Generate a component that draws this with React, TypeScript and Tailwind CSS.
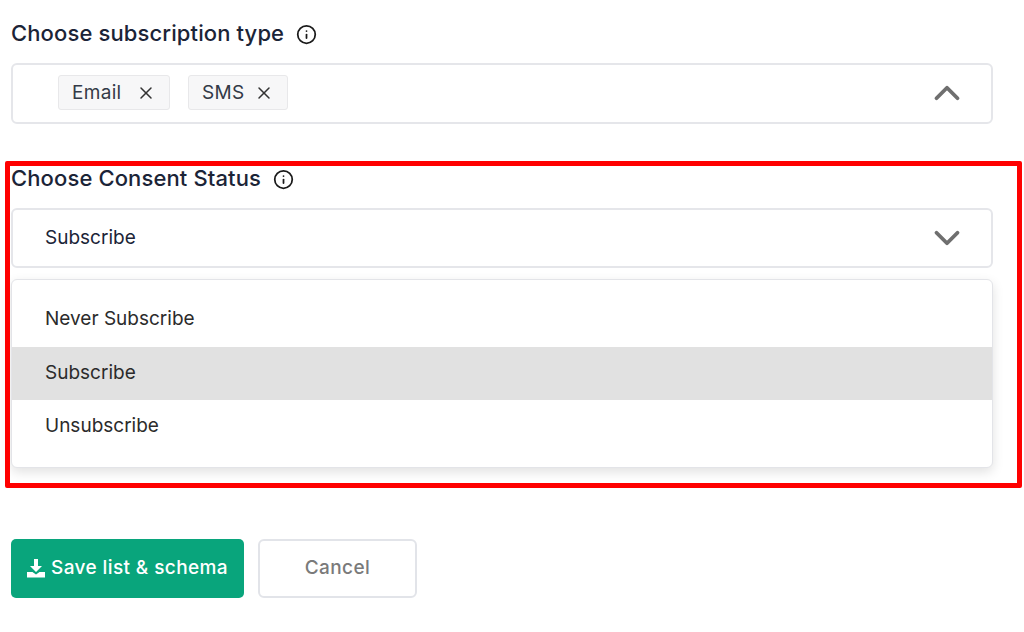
import { ChevronDown, ChevronUp, Info, X } from "lucide-react";

const Label = ({ text }: { text: string }) => (
  <div className="flex h-[30px] items-center gap-[12px] text-[22px] leading-[30px] font-medium tracking-[0.12px] text-[#1b2437]">
    <span className="pb-[2px]">{text}</span>
    <Info size={21} strokeWidth={2} className="text-[#1a1a1a]" />
  </div>
);

const Chip = ({ text, width }: { text: string; width: string }) => (
  <div
    className={`flex h-[35px] items-center justify-between rounded-[3px] border border-[#e8e8ea] bg-[#f7f7f8] pl-[13px] pr-[13px] text-[19px] tracking-[0.3px] text-[#333a47] ${width}`}
  >
    <span className="pt-[1px]">{text}</span>
    <X size={20} strokeWidth={1.8} className="text-[#333]" />
  </div>
);

const DownloadIcon = () => (
  <svg width="18" height="19" viewBox="0 0 18 19" fill="white">
    <path d="M7 0h4v7h4l-6 6-6-6h4z" />
    <path d="M0 13h5.5l3.5 2.5 3.5-2.5H18v5.5H0z" />
  </svg>
);

export default function App() {
  return (
    <div
      className="relative h-[632px] w-[1024px] overflow-hidden bg-white pl-[11px] pt-[19px] pr-[31px]"
      style={{ fontFamily: "Inter, 'Open Sans', sans-serif" }}
    >
      <Label text="Choose subscription type" />

      <div className="mt-[14px] flex h-[61px] items-center justify-between rounded-[6px] border-2 border-[#e5e6ea] pl-[45px] pr-[23px]">
        <div className="mb-[2px] flex gap-[18px]">
          <Chip text="Email" width="w-[112px]" />
          <Chip text="SMS" width="w-[100px]" />
        </div>
        <ChevronUp size={42} strokeWidth={2.2} className="mb-[2px] text-[#6f6f6f]" />
      </div>

      <div className="mt-[40px]">
        <Label text="Choose Consent Status" />
      </div>

      <div className="mt-[14px] flex h-[60px] items-center justify-between rounded-[6px] border-2 border-[#e5e6ea] pl-[32px] pr-[23px] text-[19px] text-[#1b2437]">
        <span>Subscribe</span>
        <ChevronDown size={42} strokeWidth={2.2} className="text-[#6f6f6f]" />
      </div>

      <div className="mt-[11px] h-[189px] overflow-hidden rounded-[6px] border border-[#e3e4e8] bg-white py-[14px] text-[19px] text-[#2b2b2b] shadow-[0_4px_12px_rgba(0,0,0,0.12)]">
        <div className="flex h-[53px] items-center pb-[2px] pl-[33px]">Never Subscribe</div>
        <div className="flex h-[53px] items-center bg-[#e1e1e1] pb-[1px] pl-[33px]">Subscribe</div>
        <div className="flex h-[53px] items-center pb-[1px] pl-[33px]">Unsubscribe</div>
      </div>

      <div className="mt-[71px] flex gap-[14px] text-[19px] font-[450] tracking-[0.4px]">
        <button className="flex h-[59px] w-[233px] items-center justify-center gap-[6px] rounded-[5px] bg-[#09a57c] text-white">
          <DownloadIcon />
          Save list &amp; schema
        </button>
        <button className="h-[59px] w-[159px] rounded-[6px] border-2 border-[#e2e4e9] bg-white text-[#7a7a7a]">
          Cancel
        </button>
      </div>

      <div className="absolute left-[5px] top-[161px] h-[327px] w-[1017px] rounded-[2px] border-[5px] border-[#ff0000]" />
    </div>
  );
}
